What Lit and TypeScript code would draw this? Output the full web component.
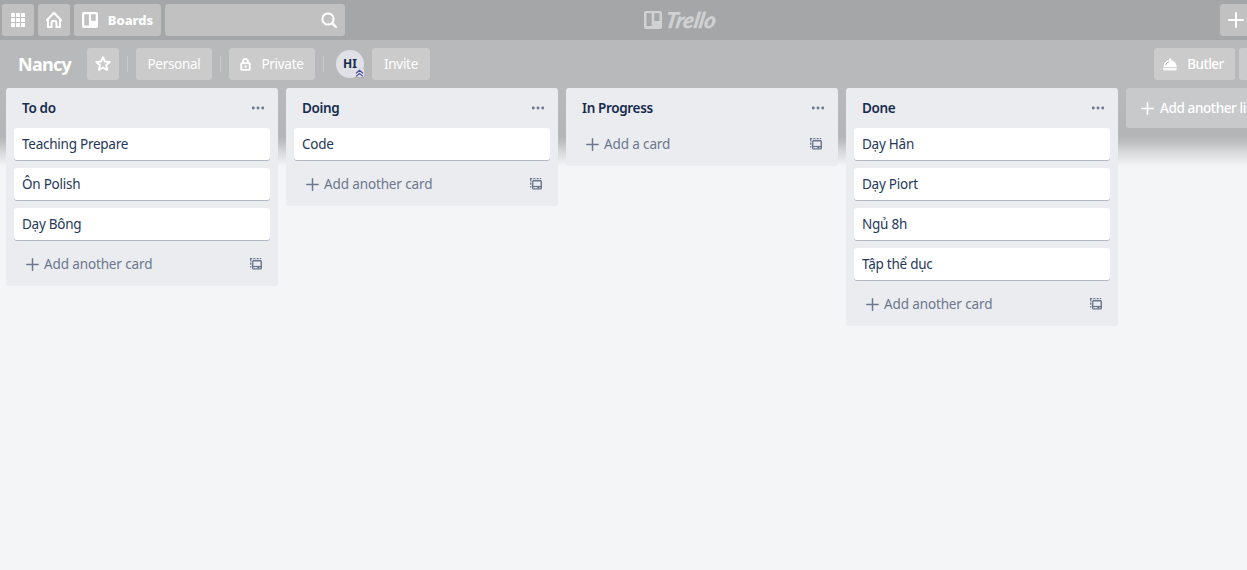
import { LitElement, html, svg, css } from "lit";
import { customElement, property } from "lit/decorators.js";

interface Column {
  title: string;
  cards: string[];
}

const columns: Column[] = [
  { title: "To do", cards: ["Teaching Prepare", "Ôn Polish", "Dạy Bông"] },
  { title: "Doing", cards: ["Code"] },
  { title: "In Progress", cards: [] },
  { title: "Done", cards: ["Dạy Hân", "Dạy Piort", "Ngủ 8h", "Tập thể dục"] },
];

const plus = (size: number, weight: number) => html`<svg width=${size} height=${size} viewBox="0 0 16 16" fill="none" stroke="currentColor" stroke-width=${weight} stroke-linecap="round"><path d="M8 1v14M1 8h14" /></svg>`;

const appsIcon = html`<svg width="14" height="14" viewBox="0 0 14 14" fill="currentColor">
  ${[0, 5, 10].map((y) => [0, 5, 10].map((x) => svg`<rect x=${x} y=${y} width="4" height="4" rx=".6" />`))}
</svg>`;

const homeIcon = html`<svg width="18" height="18" viewBox="0 0 18 18" fill="none" stroke="currentColor" stroke-width="2" stroke-linejoin="round" stroke-linecap="round">
  <path d="M1.9 9.2 9 1.8l7.1 7.4M3 8.4V16h3.6v-3.8a2.4 2.4 0 0 1 4.8 0V16H15V8.4" />
</svg>`;

const boardIcon = html`<svg width="16" height="16" viewBox="0 0 16 16" fill="currentColor">
  <path fill-rule="evenodd" d="M2 0h12a2 2 0 0 1 2 2v12a2 2 0 0 1-2 2H2a2 2 0 0 1-2-2V2a2 2 0 0 1 2-2Zm.3 2.2v11.4h4.6V2.2Zm6.8 0v6.5h4.6V2.2Z" />
</svg>`;

const searchIcon = html`<svg width="16" height="16" viewBox="0 0 16 16" fill="none" stroke="currentColor" stroke-width="2" stroke-linecap="round">
  <circle cx="7" cy="7" r="5.6" /><path d="m11.2 11.2 3.6 3.6" stroke-width="2.4" />
</svg>`;

const starIcon = html`<svg width="16" height="16" viewBox="0 0 14 14" fill="none" stroke="currentColor" stroke-width="1.7" stroke-linejoin="round">
  <path d="m7 1 1.700 3.800 4.100.45-3.050 2.800.85 4.100L7 10.100l-3.600 2.050.85-4.100L1.200 5.250l4.100-.45Z" />
</svg>`;

const lockIcon = html`<svg width="11" height="13" viewBox="0 0 11 13" fill="none" stroke="currentColor" stroke-width="1.9">
  <rect x="1.2" y="5.1" width="8.6" height="6.8" rx=".8" /><path d="M3.1 5V3.4a2.4 2.4 0 0 1 4.8 0V5" /><rect x="4.5" y="7.5" width="2" height="2" fill="currentColor" stroke="none" />
</svg>`;

const butlerIcon = html`<svg width="14" height="13" viewBox="0 0 14 13" fill="currentColor">
  <circle cx="7.200" cy="1.400" r="1.200" /><path d="M.3 9.200C.6 5 3.400 2 7 2s6.500 3 6.700 7.200Z" /><path d="M.2 10h13.600v1.500h-.4v.9H.6v-.9H.2Z" opacity=".85" />
  <path d="M2.700 7.200c.5-1.900 1.600-3 3.300-3.500" fill="none" stroke="#aaa" stroke-width="1" />
</svg>`;

const dotsIcon = html`<svg width="14" height="4" viewBox="0 0 14 4" fill="currentColor">
  <circle cx="2.300" cy="2" r="1.450" /><circle cx="7" cy="2" r="1.450" /><circle cx="11.700" cy="2" r="1.450" />
</svg>`;

const templateIcon = html`<svg width="12" height="12" viewBox="0 0 12 12" fill="none" stroke="currentColor">
  <path d="M.7 9.500V8M.7 6.800V4.600M.7 3.400V.7H2.200M3.400.7h2M6.600.7h2M9.800.7h1.400" stroke-width="1.300" />
  <rect x="2.700" y="2.700" width="8.600" height="8.200" rx=".8" stroke-width="1.400" />
  <path d="M2.700 8.500h8.600" stroke-width="1.200" /><path d="M7.300 9.600h2.200" stroke-width="1.500" />
</svg>`;

@customElement("board-list")
class BoardList extends LitElement {
  @property({ attribute: false }) column!: Column;

  static styles = css`
    :host { display: block; flex: none; width: 272px; background: #ebecf0; border-radius: 3px; color: #172b4d; }
    svg { display: block; flex: none; }
    .head { display: flex; align-items: center; justify-content: space-between; height: 40px; padding: 0 13px 0 16px; box-sizing: border-box; }
    .title { font-weight: 600; font-size: 13.500px; letter-spacing: -0.350px; }
    .dots { color: #6b778c; }
    .cards { display: grid; gap: 8px; padding: 0 8px; }
    .card { height: 32px; line-height: 32px; padding: 0 8px; background: #fff; border-radius: 3px; box-shadow: 0 1px 0 #091e4240; color: #253858; font-size: 13.500px; letter-spacing: -0.250px; }
    .foot { display: flex; align-items: center; height: 32px; padding: 0 16px 6px 20px; color: #6b778c; }
    .foot.after { padding-top: 8px; }
    .add { flex: 1; margin-left: 5px; font-size: 13.500px; letter-spacing: -0.130px; }
  `;

  render() {
    const { title, cards } = this.column;
    return html`
      <div class="head"><span class="title">${title}</span><span class="dots">${dotsIcon}</span></div>
      ${cards.length ? html`<div class="cards">${cards.map((c) => html`<div class="card">${c}</div>`)}</div>` : ""}
      <div class=${cards.length ? "foot after" : "foot"}>
        ${plus(13, 1.8)}<span class="add">${cards.length ? "Add another card" : "Add a card"}</span>${templateIcon}
      </div>`;
  }
}

@customElement("app-root")
class AppRoot extends LitElement {
  static styles = css`
    :host {
      display: block; height: 570px; overflow: hidden; color: #fff;
      font: 13.500px/20px "Noto Sans", "Open Sans", sans-serif;
      background: linear-gradient(#b8b9bb 0, #b8b9bb 88px, #b4b5b7 136px, #c0c1c3 143px, #dcdddf 154px, #f4f5f7 166px);
    }
    svg { display: block; flex: none; }
    .top { display: flex; align-items: center; gap: 4px; height: 40px; padding-left: 2px; background: #a5a6a8; }
    .tool { display: flex; align-items: center; justify-content: center; flex: none; box-sizing: border-box; width: 32px; height: 32px; border-radius: 3px; background: #c1c1c1; }
    .boards { width: 87px; gap: 10px; font-weight: 800; font-size: 13px; }
    .search { width: 180px; justify-content: flex-end; padding-right: 8px; }
    .logo { display: flex; align-items: center; gap: 4px; margin-left: 295px; color: #d0d2d2; }
    .word { font: italic 700 22px/24px "Lato", sans-serif; letter-spacing: -0.100px; -webkit-text-stroke: .4px currentColor; transform: skewX(-10deg); }
    .create { margin-left: auto; width: 27px; justify-content: flex-start; padding-left: 8px; border-radius: 3px 0 0 3px; }
    .bar { display: flex; align-items: center; height: 48px; padding-left: 18px; letter-spacing: -0.300px; }
    .name { width: 69px; font-size: 18px; font-weight: 700; letter-spacing: -0.700px; }
    .btn { display: flex; align-items: center; justify-content: center; flex: none; box-sizing: border-box; height: 32px; border-radius: 3px; background: #cbcbcb; }
    .rule { width: 1px; height: 16px; margin: 0 8px; background: #c8c9cb; }
    .star { width: 32px; }
    .personal { width: 76px; }
    .private { width: 86px; gap: 10px; }
    .invite { width: 58px; }
    .member { position: relative; display: grid; place-items: center; width: 28px; height: 28px; margin: 0 8px 0 4px; border-radius: 50%; background: #dfe1e6; color: #172b4d; font-size: 12px; font-weight: 700; letter-spacing: 0; }
    .badge { position: absolute; right: 0; bottom: 0; }
    .butler { width: 81px; gap: 10px; margin-left: auto; padding-right: 2px; font-weight: 500; letter-spacing: -0.500px; }
    .menu { width: 8px; margin-left: 4px; border-radius: 3px 0 0 3px; }
    .lists { display: flex; align-items: flex-start; gap: 8px; padding-left: 6px; }
    .new { display: flex; align-items: center; gap: 6px; flex: none; box-sizing: border-box; width: 272px; height: 40px; padding-left: 15px; border-radius: 3px; background: #c8c9cb; font-weight: 500; letter-spacing: -0.380px; white-space: nowrap; }
  `;

  render() {
    return html`
      <header class="top">
        <span class="tool">${appsIcon}</span>
        <span class="tool">${homeIcon}</span>
        <span class="tool boards">${boardIcon}<span>Boards</span></span>
        <span class="tool search">${searchIcon}</span>
        <span class="logo">
          <svg width="18" height="18" viewBox="0 0 18 18" fill="currentColor"><path fill-rule="evenodd" d="M2 0h14a2 2 0 0 1 2 2v14a2 2 0 0 1-2 2H2a2 2 0 0 1-2-2V2a2 2 0 0 1 2-2Zm.5 2.300v12.700h5.200V2.300Zm7.800 0v7.700h5.200V2.300Z" /></svg>
          <span class="word">Trello</span>
        </span>
        <span class="tool create">${plus(16, 2)}</span>
      </header>
      <nav class="bar">
        <span class="name">Nancy</span>
        <span class="btn star">${starIcon}</span>
        <span class="rule"></span>
        <span class="btn personal">Personal</span>
        <span class="rule"></span>
        <span class="btn private">${lockIcon}<span>Private</span></span>
        <span class="rule"></span>
        <span class="member">HI
          <svg class="badge" width="9" height="9" viewBox="0 0 9 9" fill="none"><rect width="9" height="9" fill="#dfe1e6" /><path d="M1 4.200 4.500 1.300 8 4.200M1 7.400l3.500-2.900L8 7.400" stroke="#4b4ba8" stroke-width="1.200" /><path d="M0 8.600h9" stroke="#999" stroke-width=".8" /></svg>
        </span>
        <span class="btn invite">Invite</span>
        <span class="btn butler">${butlerIcon}<span>Butler</span></span>
        <span class="btn menu"></span>
      </nav>
      <main class="lists">
        ${columns.map((column) => html`<board-list .column=${column}></board-list>`)}
        <div class="new">${plus(13, 2)}<span>Add another list</span></div>
      </main>`;
  }
}
